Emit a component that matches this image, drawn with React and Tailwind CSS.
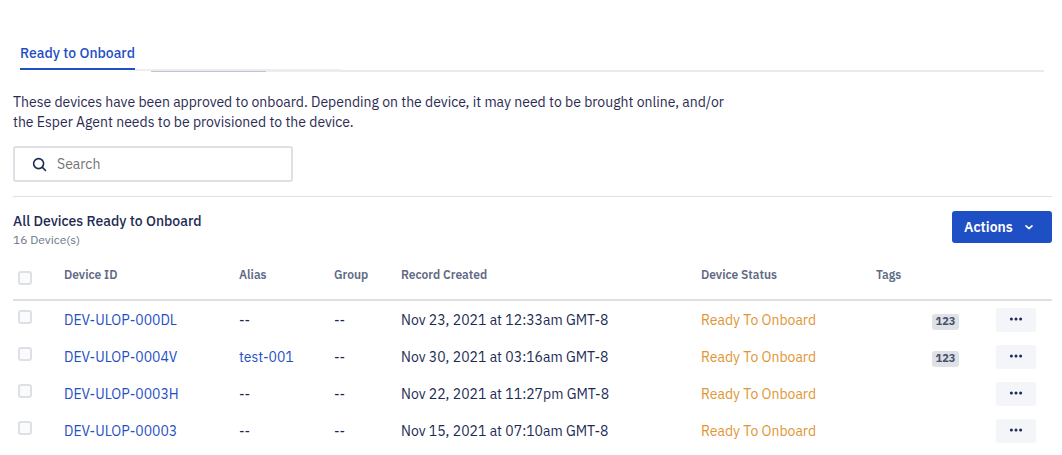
import React from "react";

const devices = [
  { id: "DEV-ULOP-000DL", alias: "", created: "Nov 23, 2021 at 12:33am GMT-8", tag: "123" },
  { id: "DEV-ULOP-0004V", alias: "test-001", created: "Nov 30, 2021 at 03:16am GMT-8", tag: "123" },
  { id: "DEV-ULOP-0003H", alias: "", created: "Nov 22, 2021 at 11:27pm GMT-8", tag: "" },
  { id: "DEV-ULOP-00003", alias: "", created: "Nov 15, 2021 at 07:10am GMT-8", tag: "" },
];

function Checkbox({ label }) {
  return (
    <input
      type="checkbox"
      aria-label={label}
      className="block size-3.5 appearance-none rounded-[3px] border-2 border-[#dfe0e6] bg-[#fafbfc] checked:border-[#1f4fc4] checked:bg-[#1f4fc4]"
    />
  );
}

function Tabs() {
  return (
    <nav className="ml-1 mr-2 flex items-end pt-10" aria-label="Device views">
      <a
        href="#ready"
        aria-current="page"
        className="ml-[3px] border-b-2 border-[#1f4fc4] pt-0.5 pb-1 text-sm leading-[22px] font-medium whitespace-nowrap text-[#1f4fc4]"
      >
        Ready to Onboard
      </a>
      <div className="-mb-0.5 flex h-[3px] flex-1">
        <div className="h-0.5 w-4 bg-[#eeeeee]" />
        <div className="w-[115px] border-b border-[#bcc5d6] bg-[#ececee]" />
        <div className="w-[75px] bg-[#ededf0]" />
        <div className="h-0.5 flex-1 self-end bg-[#e9e9ee]" />
      </div>
    </nav>
  );
}

function DeviceRow({ device }) {
  return (
    <tr className="h-[37px] [&>td+td]:pt-0.5">
      <td className="pb-1 pl-[5px]">
        <Checkbox label={`Select ${device.id}`} />
      </td>
      <td>
        <a href="#device" className="text-[#1f4fc4]">{device.id}</a>
      </td>
      <td>
        {device.alias ? <a href="#alias" className="text-[#1f4fc4]">{device.alias}</a> : "--"}
      </td>
      <td>--</td>
      <td>{device.created}</td>
      <td className="text-[#df9635]">Ready To Onboard</td>
      <td className="pl-14">
        {device.tag && (
          <span className="mt-1 flex h-4 w-[27px] items-center justify-center rounded-[3px] bg-[#dfe1e7] text-[11px] font-bold text-[#44506c]">
            {device.tag}
          </span>
        )}
      </td>
      <td>
        <button
          type="button"
          aria-label={`More actions for ${device.id}`}
          className="flex h-6 w-10 items-center justify-center rounded-[3px] bg-[#f4f5f8]"
        >
          <svg viewBox="0 0 14 4" className="mb-0.5 h-1 w-3.5" fill="#1c2b55" aria-hidden="true">
            <circle cx="2.4" cy="2" r="1.5" />
            <circle cx="7" cy="2" r="1.5" />
            <circle cx="11.6" cy="2" r="1.5" />
          </svg>
        </button>
      </td>
    </tr>
  );
}

export default function App() {
  return (
    <main className="min-h-screen bg-white pr-2.5 pl-[13px] font-['IBM_Plex_Sans',Roboto,sans-serif] text-sm text-[#1c2b55]">
      <Tabs />

      <p className="mt-[22px] max-w-[730px] leading-5 text-[#2b2b52]">
        These devices have been approved to onboard. Depending on the device, it may need to be brought online, and/or
        the Esper Agent needs to be provisioned to the device.
      </p>

      <label className="mt-3.5 flex h-9 w-[280px] items-center gap-2.5 rounded-[3px] border-2 border-[#dfe0e6] pr-2 pl-[17px]">
        <svg viewBox="0 0 15 15" className="size-[15px] shrink-0" fill="none" stroke="#1c2b55" strokeWidth="1.6" strokeLinecap="round" aria-hidden="true">
          <circle cx="6.6" cy="6.6" r="5" />
          <path d="M10.4 10.4L13.5 13.5" />
        </svg>
        <input type="text" aria-label="Search" placeholder="Search" className="min-w-0 flex-1 outline-none placeholder:text-[#757575]" />
      </label>

      <section className="mt-3.5 border-t border-[#dfe0e4] pt-3.5">
        <header className="flex items-start justify-between">
          <div>
            <h1 className="leading-5 font-medium">All Devices Ready to Onboard</h1>
            <p className="text-xs leading-[18px] text-[#6b7488]">16 Device(s)</p>
          </div>
          <button
            type="button"
            className="flex h-8 w-[100px] items-center gap-2 rounded-[3px] bg-[#1f4fc4] pl-3 font-semibold text-white"
          >
            Actions
            <svg viewBox="0 0 16 16" className="size-4" fill="none" stroke="currentColor" strokeWidth="1.6" strokeLinecap="round" strokeLinejoin="round" aria-hidden="true">
              <path d="M5 6.8L8 9.6L11 6.8" />
            </svg>
          </button>
        </header>

        <table className="mt-1.5 w-full table-fixed border-collapse text-left">
          <colgroup>
            <col className="w-[51px]" />
            <col className="w-[175px]" />
            <col className="w-[95px]" />
            <col className="w-[67px]" />
            <col className="w-[300px]" />
            <col className="w-[175px]" />
            <col className="w-[120px]" />
            <col className="w-[56px]" />
          </colgroup>
          <thead className="border-b-2 border-[#dfe0e6] text-xs text-[#5f6b85]">
            <tr className="h-[45px] [&>th]:font-semibold [&>th+th]:pb-1">
              <th className="pt-0.5 pl-[5px]"><Checkbox label="Select all devices" /></th>
              <th>Device ID</th>
              <th>Alias</th>
              <th>Group</th>
              <th>Record Created</th>
              <th>Device Status</th>
              <th>Tags</th>
              <th aria-label="Row actions" />
            </tr>
          </thead>
          <tbody>
            {devices.map((device) => (
              <DeviceRow key={device.id} device={device} />
            ))}
          </tbody>
        </table>
      </section>
    </main>
  );
}
